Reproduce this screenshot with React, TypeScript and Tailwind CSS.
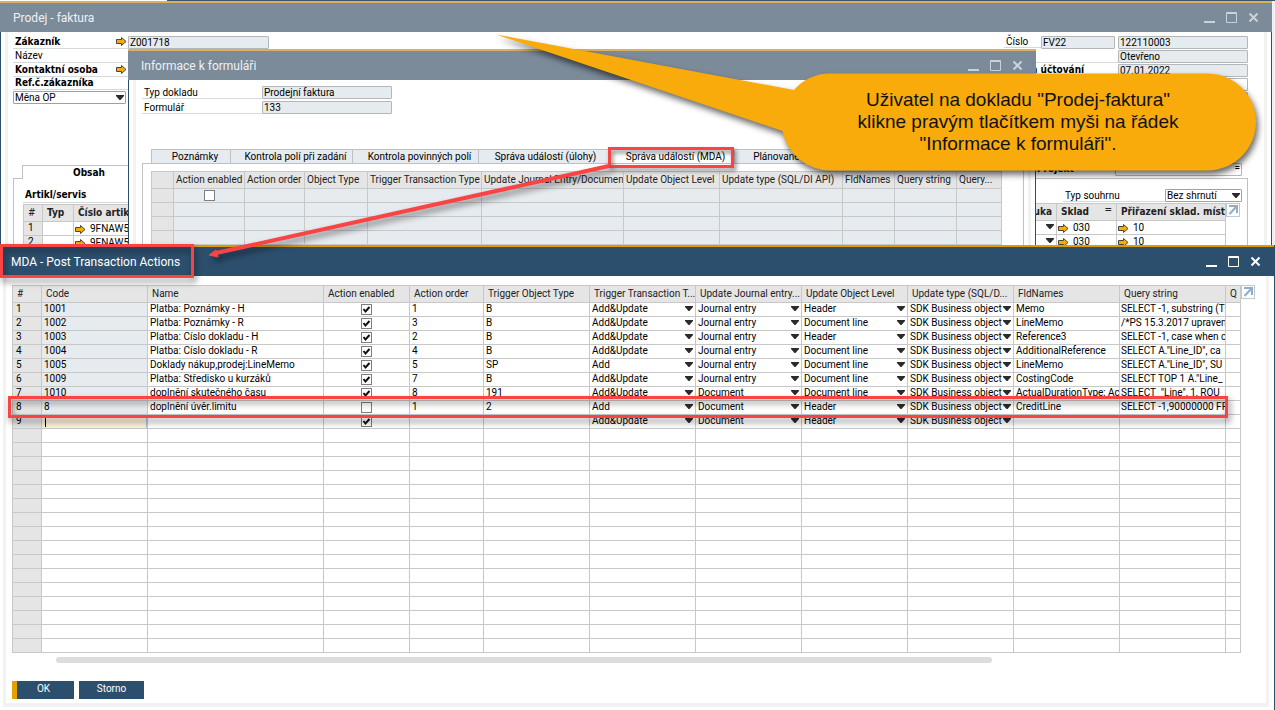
import React from 'react';

const mdaColumns = [
  { title: "#", width: "w-[29px]" },
  { title: "Code", width: "w-[106px]" },
  { title: "Name", width: "w-[176px]" },
  { title: "Action enabled", width: "w-[86px]" },
  { title: "Action order", width: "w-[74px]" },
  { title: "Trigger Object Type", width: "w-[106px]" },
  { title: "Trigger Transaction T...", width: "w-[106px]" },
  { title: "Update Journal entry...", width: "w-[106px]" },
  { title: "Update Object Level", width: "w-[106px]" },
  { title: "Update type (SQL/D...", width: "w-[106px]" },
  { title: "FldNames", width: "w-[106px]" },
  { title: "Query string", width: "w-[106px]" },
  { title: "Q", width: "" },
];

const mdaRows = [
  { code: "1001", name: "Platba: Poznámky - H", enabled: true, order: "1", objectType: "B", transaction: "Add&Update", journal: "Journal entry", level: "Header", fields: "Memo", query: "SELECT -1, substring (TO" },
  { code: "1002", name: "Platba: Poznámky - R", enabled: true, order: "3", objectType: "B", transaction: "Add&Update", journal: "Journal entry", level: "Document line", fields: "LineMemo", query: "/*PS 15.3.2017 upraveno" },
  { code: "1003", name: "Platba: Číslo dokladu - H", enabled: true, order: "2", objectType: "B", transaction: "Add&Update", journal: "Journal entry", level: "Header", fields: "Reference3", query: "SELECT -1, case when c" },
  { code: "1004", name: "Platba: Číslo dokladu - R", enabled: true, order: "4", objectType: "B", transaction: "Add&Update", journal: "Journal entry", level: "Document line", fields: "AdditionalReference", query: "SELECT A.\"Line_ID\", ca" },
  { code: "1005", name: "Doklady nákup,prodej:LineMemo", enabled: true, order: "5", objectType: "SP", transaction: "Add", journal: "Journal entry", level: "Document line", fields: "LineMemo", query: "SELECT A.\"Line_ID\", SU" },
  { code: "1009", name: "Platba: Středisko u kurzáků", enabled: true, order: "7", objectType: "B", transaction: "Add&Update", journal: "Journal entry", level: "Document line", fields: "CostingCode", query: "SELECT TOP 1 A.\"Line_" },
  { code: "1010", name: "doplnění skutečného času", enabled: true, order: "8", objectType: "191", transaction: "Add&Update", journal: "Document", level: "Document line", fields: "ActualDurationType; Act", query: "SELECT  \"Line\", 1, ROU" },
  { code: "8", name: "doplnění úvěr.limitu", enabled: false, order: "1", objectType: "2", transaction: "Add", journal: "Document", level: "Header", fields: "CreditLine", query: "SELECT -1,90000000 FR" },
  { code: "", name: "", enabled: true, order: "", objectType: "", transaction: "Add&Update", journal: "Document", level: "Header", fields: "", query: "" },
];

const formColumns = [
  { title: "", width: "w-[22px]" },
  { title: "Action enabled", width: "w-[71px]" },
  { title: "Action order", width: "w-[60px]" },
  { title: "Object Type", width: "w-[63px]" },
  { title: "Trigger Transaction Type", width: "w-[114px]" },
  { title: "Update Journal Entry/Document", width: "w-[142px]" },
  { title: "Update Object Level", width: "w-[96px]" },
  { title: "Update type (SQL/DI API)", width: "w-[123px]" },
  { title: "FldNames", width: "w-[52px]" },
  { title: "Query string", width: "w-[62px]" },
  { title: "Query...", width: "" },
];

const formTabs = [
  { title: "Poznámky", width: "w-[79px] pl-2" },
  { title: "Kontrola polí při zadání", width: "w-[122px] pl-2" },
  { title: "Kontrola povinných polí", width: "w-[126px] pl-2" },
  { title: "Správa událostí (úlohy)", width: "w-[130px] pl-1" },
  { title: "Správa událostí (MDA)", width: "w-[126px] pl-2", active: true },
  { title: "Plánované úlohy", width: "w-[110px]" },
];

const cell = "h-[14px] overflow-hidden whitespace-nowrap border-b border-r border-[#c8c8c8] p-0 align-top leading-3";
const head = "h-[18px] overflow-hidden whitespace-nowrap border-y border-r border-[#c8c8c8] bg-[#e5e5e5] p-0 text-left leading-4 text-[#222]";
const field = "h-[13px] rounded-[1px] border border-[#b4b7ba] bg-[#e6ebef] px-px text-[10px] leading-[11px] text-black";

function Caret({ className = "" }: { className?: string }) {
  return (
    <svg className={`pointer-events-none absolute ${className}`} width="8" height="5" viewBox="0 0 8 5" aria-hidden="true">
      <path d="M0 0h8v1L4.500 5h-1L0 1z" fill="#2b2b2b" />
    </svg>
  );
}

function LinkArrow() {
  return (
    <svg className="mr-px shrink-0" width="11" height="9" viewBox="0 0 11 9" aria-hidden="true">
      <path d="M.5 2.500h5v-2l4.500 4-4.500 4v-2h-5z" fill="#f5ac0a" stroke="#4d4534" strokeWidth="1" />
    </svg>
  );
}

function ExpandButton() {
  return (
    <button aria-label="Expand" className="block h-[14px] w-[14px] shrink-0 border border-[#b9cbd9] bg-white">
      <svg width="12" height="12" viewBox="0 0 12 12" fill="none" stroke="#8fadc9" strokeWidth="2" aria-hidden="true">
        <path d="M2 2h8v7M10 2L2.500 10" />
      </svg>
    </button>
  );
}

function TitleBar({ title, active = false }: { title: string; active?: boolean }) {
  return (
    <header className={`flex h-[31px] items-center border-t-2 pr-[13px] ${active ? "border-[#dd9c05] bg-[#2d4f6e] pl-[11px]" : "border-[#dab15c] bg-[#7c8b9a] pl-[13px]"}`}>
      <h2 className={`grow pt-px text-[12px] leading-4 ${active ? "text-white" : "text-[#eef1f3]"}`}>{title}</h2>
      <div className={`flex gap-[11px] ${active ? "text-white" : "text-[#cbd2d8]"}`}>
        <button aria-label="Minimize">
          <svg width="11" height="11" viewBox="0 0 11 11"><path d="M0 9h11v2H0z" fill="currentColor" /></svg>
        </button>
        <button aria-label="Maximize">
          <svg width="11" height="11" viewBox="0 0 11 11" fill="none" stroke="currentColor"><path d="M.5.5h10v10H.5zM0 1.500h11" /></svg>
        </button>
        <button aria-label="Close">
          <svg width="11" height="11" viewBox="0 0 11 11" fill="none" stroke="currentColor" strokeWidth="2"><path d="M1.500 1.500l8 8M9.500 1.500l-8 8" /></svg>
        </button>
      </div>
    </header>
  );
}

function CellSelect({ value, label }: { value: string; label: string }) {
  return (
    <div className="relative">
      <select aria-label={label} defaultValue={value} className="block h-[13px] w-full appearance-none bg-transparent p-0 pb-px pl-[2px] leading-3">
        <option>{value}</option>
      </select>
      <Caret className="right-[2px] top-[3px]" />
    </div>
  );
}

function CheckBox({ checked, label }: { checked: boolean; label: string }) {
  return (
    <span className="relative mx-auto mt-px block h-[11px] w-[11px]">
      <input type="checkbox" aria-label={label} defaultChecked={checked} className="peer block h-[11px] w-[11px] appearance-none border border-[#7b7f83] bg-white" />
      <svg className="pointer-events-none absolute left-0 top-0 hidden peer-checked:block" width="11" height="11" viewBox="0 0 11 11" fill="none" stroke="#111" strokeWidth="2" aria-hidden="true">
        <path d="M2.500 5l2 2.500L8.500 3" />
      </svg>
    </span>
  );
}

function InvoiceWindow() {
  return (
    <section className="absolute bottom-0 left-0 right-[3px] top-px bg-white">
      <TitleBar title="Prodej - faktura" />
      <div className="h-full border-x border-[#2d4f6e] px-1">
        <div className="flex h-full justify-between border-x-3 border-[#f2f2f2] pl-[5px] pr-4 pt-[3px]">
          <div className="w-[256px]">
            <div className="flex">
              <div className="w-[115px] font-['DejaVu_Sans_Condensed','DejaVu_Sans',sans-serif] font-bold leading-[13px]">
                <div className="flex h-[14px] items-center justify-between border-b border-[#d3dade] pl-[2px]">
                  <label htmlFor="customer">Zákazník</label>
                  <LinkArrow />
                </div>
                <div className="h-[14px] border-b border-[#d3dade] pl-[2px] font-[Roboto,'Noto_Sans',sans-serif] font-normal">Název</div>
                <div className="flex h-[14px] items-center justify-between border-b border-[#d3dade] pl-[2px]">
                  <span>Kontaktní osoba</span>
                  <LinkArrow />
                </div>
                <div className="h-[13px] border-b border-[#d3dade] pl-[2px] leading-3">Ref.č.zákazníka</div>
              </div>
              <input id="customer" readOnly defaultValue="Z001718" className={`${field} mt-px w-[141px]`} />
            </div>
            <div className="relative mt-px w-[113px]">
              <select aria-label="Měna" className="block h-[13px] w-full appearance-none rounded-[1px] border border-[#9ea1a4] bg-white pl-px leading-[11px]">
                <option>Měna OP</option>
              </select>
              <Caret className="right-[2px] top-1" />
            </div>

            <div className="mt-[61px]">
              <div className="flex">
                <div className="w-[9px] border-b border-[#c0c0c0]"></div>
                <button role="tab" aria-selected="true" className="h-[14px] grow border-l border-t border-[#c0c0c0] pl-[50px] text-left font-['DejaVu_Sans_Condensed','DejaVu_Sans',sans-serif] font-bold leading-[14px]">Obsah</button>
              </div>
              <div className="h-20 border-l border-[#c0c0c0] pl-[9px]">
                <div className="h-6 border-b border-[#d3dade] pl-[2px] pt-[10px] font-['DejaVu_Sans_Condensed','DejaVu_Sans',sans-serif] font-bold leading-3">Artikl/servis</div>
                <table className="mt-px w-full table-fixed border-separate border-spacing-0 border-l border-[#c8c8c8]">
                  <colgroup>
                    <col className="w-[19px]" />
                    <col className="w-[31px]" />
                    <col />
                  </colgroup>
                  <thead>
                    <tr className="font-['DejaVu_Sans_Condensed','DejaVu_Sans',sans-serif]">
                      <th className={`${head} pl-1 font-normal`}>#</th>
                      <th className={`${head} pl-1`}>Typ</th>
                      <th className={`${head} pl-1`}>Číslo artiklu</th>
                    </tr>
                  </thead>
                  <tbody>
                    {["1", "2"].map((num) => (
                      <tr key={num}>
                        <td className={`${cell} bg-[#e5e5e5] pl-1`}>{num}</td>
                        <td className={cell}></td>
                        <td className={cell}>
                          <div className="flex items-center gap-[3px] pl-px pt-px"><LinkArrow />9FNAW5</div>
                        </td>
                      </tr>
                    ))}
                  </tbody>
                </table>
              </div>
            </div>
          </div>

          <div className="w-[244px]">
            <div className="flex justify-end gap-[3px] pt-px">
              <label htmlFor="number" className="h-3 w-[38px] border-b border-[#d3dade] pl-[2px] leading-3">Číslo</label>
              <input id="number" readOnly defaultValue="FV22" className={`${field} -ml-[3px] w-[74px]`} />
              <input aria-label="Číslo dokladu" readOnly defaultValue="122110003" className={`${field} w-[130px]`} />
            </div>
            <div className="mt-px flex justify-end">
              <div className="grow border-b border-[#d3dade]"></div>
              <input aria-label="Stav" readOnly defaultValue="Otevřeno" className={`${field} w-[130px]`} />
            </div>
            <div className="mt-px flex justify-end">
              <label htmlFor="posting" className="w-[114px] pl-6 font-['DejaVu_Sans_Condensed','DejaVu_Sans',sans-serif] font-bold leading-3">m účtování</label>
              <input id="posting" readOnly defaultValue="07.01.2022" className={`${field} w-[130px]`} />
            </div>
            <div className="mt-px flex flex-col items-end gap-px">
              <input aria-label="Splatnost" className={`${field} w-[130px] !bg-white`} />
              <input aria-label="Datum" className={`${field} w-[130px]`} />
            </div>
            <div className="mt-[57px] flex pl-[30px] pr-[6px]">
              <label htmlFor="project" className="w-[81px] shrink-0 pl-[3px] font-['DejaVu_Sans_Condensed','DejaVu_Sans',sans-serif] font-bold leading-[14px]">Projekt</label>
              <div className="relative grow">
                <input id="project" className={`${field} w-full !bg-white`} />
                <span className="absolute right-[2px] top-0 leading-[11px]">=</span>
              </div>
            </div>
            <div className="mt-px h-20 border-r border-t border-[#c0c0c0] pt-[10px]">
              <div className="flex justify-end pr-[5px]">
                <label htmlFor="summary" className="h-[13px] w-[102px] border-b border-[#d3dade] pl-[2px] leading-[14px]">Typ souhrnu</label>
                <div className="relative w-[77px]">
                  <select id="summary" className="block h-[13px] w-full appearance-none rounded-[1px] border border-[#9ea1a4] bg-white pl-px leading-[11px]">
                    <option>Bez shrnutí</option>
                  </select>
                  <Caret className="right-[2px] top-1" />
                </div>
              </div>
              <div className="mt-px flex">
                <table className="w-full min-w-0 table-fixed border-separate border-spacing-0">
                  <colgroup>
                    <col />
                    <col className="w-[60px]" />
                    <col className="w-[109px]" />
                  </colgroup>
                  <thead>
                    <tr className="font-['DejaVu_Sans_Condensed','DejaVu_Sans',sans-serif]">
                      <th className={`${head} pr-1 !text-right`}>uka</th>
                      <th className={`${head} px-1`}><div className="flex justify-between">Sklad<span className="font-normal leading-[12px]">=</span></div></th>
                      <th className={`${head} pl-1`}>Přiřazení sklad. míst</th>
                    </tr>
                  </thead>
                  <tbody>
                    {["1", "2"].map((num) => (
                      <tr key={num}>
                        <td className={cell}><CellSelect value="" label={`Záruka ${num}`} /></td>
                        <td className={cell}><div className="flex items-center gap-[3px] pl-px pt-px"><LinkArrow />030</div></td>
                        <td className={cell}><div className="flex items-center gap-[3px] pl-px pt-px"><LinkArrow />10</div></td>
                      </tr>
                    ))}
                  </tbody>
                </table>
                <div className="w-[21px] shrink-0"><ExpandButton /></div>
              </div>
            </div>
          </div>
        </div>
      </div>
    </section>
  );
}

function FormInfoWindow() {
  return (
    <section className="absolute bottom-0 left-[128px] right-[239px] top-[49px] bg-white">
      <TitleBar title="Informace k formuláři" />
      <div className="h-full border-x border-[#2d4f6e] px-1">
        <div className="h-full border-x-3 border-[#f2f2f2] pl-[6px] pr-1 pt-[6px]">
          <div className="flex flex-col gap-[2px]">
            <div className="flex">
              <label htmlFor="doc-type" className="h-[13px] w-[120px] border-b border-[#d3dade] pl-[2px] leading-[14px]">Typ dokladu</label>
              <input id="doc-type" readOnly defaultValue="Prodejní faktura" className={`${field} w-[130px]`} />
            </div>
            <div className="flex">
              <label htmlFor="form" className="h-[13px] w-[120px] border-b border-[#d3dade] pl-[2px] leading-[14px]">Formulář</label>
              <input id="form" readOnly defaultValue="133" className={`${field} w-[130px]`} />
            </div>
          </div>

          <div role="tablist" className="mt-[35px] flex pl-[9px]">
            {formTabs.map((tab) => (
              <button
                key={tab.title}
                role="tab"
                aria-selected={!!tab.active}
                className={`h-[14px] border-l border-t border-[#c0c0c0] leading-[14px] ${tab.width} ${tab.active ? "bg-white" : "bg-[#e6ebef]"}`}
              >
                {tab.title}
              </button>
            ))}
          </div>
          <div className="h-full border-x border-t border-[#c0c0c0] pl-2 pr-[21px] pt-[7px]">
            <table className="w-full table-fixed border-separate border-spacing-0 border-l border-[#c8c8c8]">
              <colgroup>
                {formColumns.map((col, idx) => (
                  <col key={idx} className={col.width} />
                ))}
              </colgroup>
              <thead>
                <tr>
                  {formColumns.map((col, idx) => (
                    <th key={idx} className={`${head} pl-[2px] font-normal`}>{col.title}</th>
                  ))}
                </tr>
              </thead>
              <tbody>
                {[0, 1, 2, 3, 4].map((row) => (
                  <tr key={row}>
                    {formColumns.map((col, idx) => (
                      <td key={idx} className={`${cell} ${idx === 0 ? "bg-[#e5e5e5]" : "bg-[#e6ebef]"}`}>
                        {row === 0 && idx === 1 && <CheckBox checked={false} label="Action enabled" />}
                      </td>
                    ))}
                  </tr>
                ))}
              </tbody>
            </table>
          </div>
        </div>
      </div>
    </section>
  );
}

function MdaWindow() {
  const emptyRows = Array.from({ length: 16 }, (_, idx) => idx);

  return (
    <section className="absolute inset-x-0 bottom-0 top-[245px] flex flex-col border-r border-[#2d4f6e] bg-white">
      <TitleBar title="MDA - Post Transaction Actions" active />
      <div className="mb-[3px] ml-[3px] mr-[5px] grow border-x-3 border-b-4 border-[#f2f2f2] pl-[6px] pr-[11px] pt-[9px]">
        <div className="flex">
          <table className="w-full min-w-0 table-fixed border-separate border-spacing-0 border-l border-[#c8c8c8]">
            <colgroup>
              {mdaColumns.map((col) => (
                <col key={col.title} className={col.width} />
              ))}
            </colgroup>
            <thead>
              <tr>
                {mdaColumns.map((col) => (
                  <th key={col.title} className={`${head} pl-1 font-normal`}>{col.title}</th>
                ))}
              </tr>
            </thead>
            <tbody>
              {mdaRows.map((row, idx) => (
                <tr key={idx}>
                  <td className={`${cell} bg-[#e5e5e5] pl-[3px]`}>{idx + 1}</td>
                  {row.code ? (
                    <td className={`${cell} bg-[#e6ebef] pl-[2px]`}>{row.code}</td>
                  ) : (
                    <td className={cell}>
                      <div className="relative">
                        <input aria-label="Code" className="block h-[13px] w-full border-r border-[#a9c3dc] bg-[#fdf3da]" />
                        <span className="absolute left-[3px] top-[2px] h-[10px] w-px bg-black"></span>
                      </div>
                    </td>
                  )}
                  <td className={`${cell} pl-[2px]`}>{row.name}</td>
                  <td className={cell}><CheckBox checked={row.enabled} label={`Action enabled ${idx + 1}`} /></td>
                  <td className={`${cell} pl-[2px]`}>{row.order}</td>
                  <td className={`${cell} pl-[2px]`}>{row.objectType}</td>
                  <td className={cell}><CellSelect value={row.transaction} label="Trigger Transaction Type" /></td>
                  <td className={cell}><CellSelect value={row.journal} label="Update Journal entry" /></td>
                  <td className={cell}><CellSelect value={row.level} label="Update Object Level" /></td>
                  <td className={cell}><CellSelect value="SDK Business object" label="Update type" /></td>
                  <td className={`${cell} pl-[2px]`}>{row.fields}</td>
                  <td className={`${cell} whitespace-pre pl-px`}>{row.query}</td>
                  <td className={cell}></td>
                </tr>
              ))}
              {emptyRows.map((row) => (
                <tr key={row}>
                  {mdaColumns.map((col, idx) => (
                    <td key={col.title} className={`${cell} ${idx === 0 ? "bg-[#e5e5e5]" : ""}`}></td>
                  ))}
                </tr>
              ))}
            </tbody>
          </table>
          <ExpandButton />
        </div>
        <div className="ml-11 mr-[263px] mt-1 h-[6px] rounded-full bg-[#dcdcdc]"></div>
        <div className="mt-[18px] flex gap-[5px] text-white">
          <button className="h-[18px] w-[62px] border-l-[5px] border-[#e39f04] bg-[#2d4f6e] pb-[2px] pr-1 leading-4">OK</button>
          <button className="h-[18px] w-[65px] bg-[#2d4f6e] pb-[2px] leading-4">Storno</button>
        </div>
      </div>
    </section>
  );
}

function Annotations() {
  return (
    <div className="pointer-events-none absolute inset-0">
      <div className="absolute left-[608px] top-[147px] h-[21px] w-[126px] border-3 border-[#fa4343] drop-shadow-[2px_3px_2px_rgba(0,0,0,0.5)]"></div>
      <div className="absolute left-0 top-[244px] h-[34px] w-[194px] border-3 border-[#fa4343] drop-shadow-[2px_4px_3px_rgba(0,0,0,0.5)]"></div>
      <div className="absolute left-2 right-[47px] top-[396px] h-[22px] border-3 border-[#fa4343] drop-shadow-[2px_4px_3px_rgba(0,0,0,0.5)]"></div>
      <svg className="absolute left-0 top-0 drop-shadow-[3px_4px_3px_rgba(0,0,0,0.5)]" width="1275" height="300" viewBox="0 0 1275 300" aria-hidden="true">
        <path d="M609 166L216 253" stroke="#fa4343" strokeWidth="4" />
        <path d="M209 255L216 250L218 257z" fill="#fa4343" stroke="#fa4343" />
      </svg>
      <svg className="absolute left-0 top-0 drop-shadow-[2px_4px_3px_rgba(0,0,0,0.6)]" width="1275" height="300" viewBox="0 0 1275 300" aria-hidden="true">
        <path d="M830 73.500H1207.500A48.500 48.500 0 0 1 1207.500 170.500H830A48.500 48.500 0 0 1 782.500 131L496 34.500L794 90A48.500 48.500 0 0 1 830 73.500z" fill="#f8ab0b" />
      </svg>
      <p className="absolute left-[783px] top-[89px] w-[470px] text-center font-['Liberation_Sans',sans-serif] text-[19px] leading-[22px] text-[#111]">
        Uživatel na dokladu "Prodej-faktura"<br />
        klikne pravým tlačítkem myši na řádek<br />
        "Informace k formuláři".
      </p>
    </div>
  );
}

export default function App() {
  return (
    <main className="relative h-screen w-full overflow-hidden bg-[#eef0f2] font-[Roboto,'Noto_Sans',sans-serif] text-[10px] text-black">
      <div className="flex h-px bg-[#3a5474]">
        <div className="w-[167px] bg-white"></div>
      </div>
      <InvoiceWindow />
      <FormInfoWindow />
      <MdaWindow />
      <Annotations />
    </main>
  );
}
